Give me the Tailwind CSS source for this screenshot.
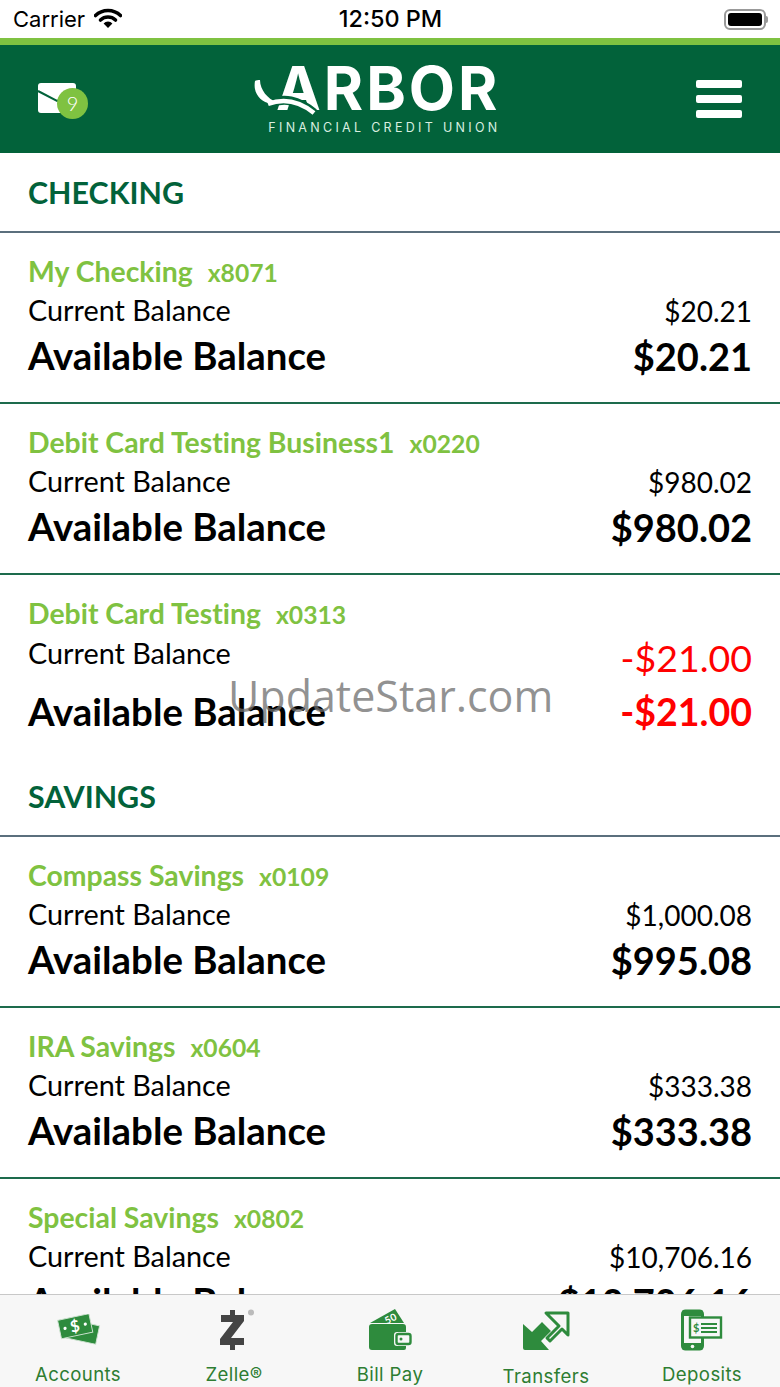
<!DOCTYPE html>
<html lang="en">
<head>
    <meta charset="UTF-8">
    <meta name="viewport" content="width=device-width, initial-scale=1.0">
    <title>Arbor Financial Credit Union</title>
    <script src="https://cdn.jsdelivr.net/npm/@tailwindcss/browser@4"></script>
</head>
<body class="bg-white">
<div class="relative w-[780px] h-[1387px] overflow-hidden flex flex-col bg-white font-[Lato,sans-serif] text-black">

    <!-- status bar -->
    <div class="h-[38px] shrink-0 flex items-center justify-between pl-[13px] pr-[12px] font-[Inter,sans-serif]">
        <div class="flex items-center gap-[9px] w-[200px]">
            <span class="text-[22px] leading-none">Carrier</span>
            <svg width="28" height="20" viewBox="0 0 28 20" class="-mt-[3px]">
                <path d="M1.5 7.5a18 18 0 0 1 25 0" fill="none" stroke="#000" stroke-width="3.6" stroke-linecap="round"/>
                <path d="M6.5 12a11 11 0 0 1 15 0" fill="none" stroke="#000" stroke-width="3.6" stroke-linecap="round"/>
                <path d="M9.6 15.4a6 6 0 0 1 8.8 0L14 20z" fill="#000"/>
            </svg>
        </div>
        <span class="text-[23.4px] leading-none font-medium">12:50 PM</span>
        <div class="w-[200px] flex justify-end items-center">
            <div class="w-[42px] h-[21px] rounded-[6px] border-2 border-[#999] p-[2px]">
                <div class="w-full h-full rounded-[3px] bg-black"></div>
            </div>
            <div class="w-[2px] h-[7px] bg-[#999] rounded-r-sm"></div>
        </div>
    </div>

    <!-- header -->
    <div class="h-[7px] shrink-0 bg-[#7fc241]"></div>
    <header class="h-[108px] shrink-0 bg-[#02623a] flex items-center justify-between pl-[38px] pr-[38px]">
        <div class="relative w-[38px] h-[30px] mt-[-3px] bg-white rounded-[3px]">
            <svg width="38" height="30" viewBox="0 0 38 30" class="absolute inset-0">
                <path d="M0 8l19 10 19-8" fill="none" stroke="#02623a" stroke-width="2"/>
            </svg>
            <div class="absolute left-[19px] top-[5px] w-[31px] h-[31px] rounded-full bg-[#7fc241] flex items-center justify-center text-white text-[20px] font-light leading-none">9</div>
        </div>
        <div class="relative w-[244px] h-[80px] ml-[-21px] mt-[-6px] flex flex-col items-end text-white">
            <div class="font-[Inter,sans-serif] font-bold text-[60px] leading-[64px] h-[64px] tracking-[3px] mr-[-3px]">ARBOR</div>
            <div class="font-[Inter,sans-serif] text-[12.5px] leading-[14px] tracking-[3.3px] mt-[1px] text-[#d9efe0] mr-[-3px]">FINANCIAL CREDIT UNION</div>
            <svg width="70" height="46" viewBox="0 0 70 46" class="absolute left-0 top-[22px]">
                <path d="M14 26C30 19 44 22 60 35" fill="none" stroke="#02623a" stroke-width="9"/>
                <path d="M14 26C30 20 45 23 60 35" fill="none" stroke="#fff" stroke-width="4.5"/>
                <path d="M1 3C-1 14 5 22 14 25C18 26 20 25 22 24C14 21 6 12 6 2C4 2 2 2 1 3Z" fill="#fff"/>
            </svg>
        </div>
        <div class="w-[46px] flex flex-col gap-[7px]">
            <div class="h-[8px] rounded-[2px] bg-white"></div>
            <div class="h-[8px] rounded-[2px] bg-white"></div>
            <div class="h-[8px] rounded-[2px] bg-white"></div>
        </div>
    </header>

    <!-- accounts -->
    <main class="flex-1 min-h-0 overflow-hidden">
        <h2 class="h-[80px] pt-[1px] flex items-center pl-[28px] text-[30.4px] font-bold text-[#02623a] border-b-2 border-[#5b6f7d]">CHECKING</h2>

        <section class="h-[171px] pt-[17px] pl-[28px] pr-[28px] border-b-2 border-[#1d6b4c]">
            <div class="h-[41px] flex items-baseline gap-[15px] text-[#7fc241] font-bold [font-variant-ligatures:none]"><span class="text-[28.4px]">My Checking</span><span class="text-[24.7px]">x8071</span></div>
            <div class="h-[40px] flex items-center justify-between text-[28px]"><span class="text-[28.8px]">Current Balance</span><span>$20.21</span></div>
            <div class="h-[50px] flex items-center justify-between text-[38px] font-bold"><span class="text-[38.4px]">Available Balance</span><span>$20.21</span></div>
        </section>

        <section class="h-[171px] pt-[17px] pl-[28px] pr-[28px] border-b-2 border-[#1d6b4c]">
            <div class="h-[41px] flex items-baseline gap-[15px] text-[#7fc241] font-bold [font-variant-ligatures:none]"><span class="text-[28.4px]">Debit Card Testing Business1</span><span class="text-[24.7px]">x0220</span></div>
            <div class="h-[40px] flex items-center justify-between text-[28px]"><span class="text-[28.8px]">Current Balance</span><span>$980.02</span></div>
            <div class="h-[50px] flex items-center justify-between text-[38px] font-bold"><span class="text-[38.4px]">Available Balance</span><span>$980.02</span></div>
        </section>

        <section class="h-[183px] pt-[17px] pl-[28px] pr-[28px]">
            <div class="h-[41px] flex items-baseline gap-[15px] text-[#7fc241] font-bold [font-variant-ligatures:none]"><span class="text-[28.4px]">Debit Card Testing</span><span class="text-[24.7px]">x0313</span></div>
            <div class="h-[40px] flex justify-between text-[28.8px] leading-[40px]"><span>Current Balance</span><span class="text-[37.5px] leading-[50px] text-[#ff0000]">-$21.00</span></div>
            <div class="h-[50px] mt-[14px] flex items-center justify-between text-[37.5px] font-bold"><span class="text-[38.4px]">Available Balance</span><span class="text-[#ff0000]">-$21.00</span></div>
        </section>

        <h2 class="h-[79px] flex items-center pl-[28px] text-[30.4px] font-bold text-[#02623a] border-b-2 border-[#5b6f7d]">SAVINGS</h2>

        <section class="h-[171px] pt-[17px] pl-[28px] pr-[28px] border-b-2 border-[#1d6b4c]">
            <div class="h-[41px] flex items-baseline gap-[15px] text-[#7fc241] font-bold [font-variant-ligatures:none]"><span class="text-[28.4px]">Compass Savings</span><span class="text-[24.7px]">x0109</span></div>
            <div class="h-[40px] flex items-center justify-between text-[28px]"><span class="text-[28.8px]">Current Balance</span><span>$1,000.08</span></div>
            <div class="h-[50px] flex items-center justify-between text-[38px] font-bold"><span class="text-[38.4px]">Available Balance</span><span>$995.08</span></div>
        </section>

        <section class="h-[171px] pt-[17px] pl-[28px] pr-[28px] border-b-2 border-[#1d6b4c]">
            <div class="h-[41px] flex items-baseline gap-[15px] text-[#7fc241] font-bold [font-variant-ligatures:none]"><span class="text-[28.4px]">IRA Savings</span><span class="text-[24.7px]">x0604</span></div>
            <div class="h-[40px] flex items-center justify-between text-[28px]"><span class="text-[28.8px]">Current Balance</span><span>$333.38</span></div>
            <div class="h-[50px] flex items-center justify-between text-[38px] font-bold"><span class="text-[38.4px]">Available Balance</span><span>$333.38</span></div>
        </section>

        <section class="h-[171px] pt-[17px] pl-[28px] pr-[28px]">
            <div class="h-[41px] flex items-baseline gap-[15px] text-[#7fc241] font-bold [font-variant-ligatures:none]"><span class="text-[28.4px]">Special Savings</span><span class="text-[24.7px]">x0802</span></div>
            <div class="h-[40px] flex items-center justify-between text-[28px]"><span class="text-[28.8px]">Current Balance</span><span>$10,706.16</span></div>
            <div class="h-[50px] flex items-center justify-between text-[38px] font-bold"><span class="text-[38.4px]">Available Balance</span><span>$10,706.16</span></div>
        </section>
    </main>

    <!-- tab bar -->
    <nav class="h-[93px] shrink-0 grid grid-cols-5 bg-[#f7f7f7] border-t border-[#c8c8c8] text-[#2e7d32] font-[Inter,sans-serif] text-[18.6px] tracking-[0.4px]">
        <div class="flex flex-col items-center">
            <svg width="46" height="32" viewBox="0 0 46 34" class="mt-[19px]">
                <g transform="rotate(12 28 20)"><rect x="9" y="9" width="35" height="20" fill="#2e8b3d" stroke="#cfe3d2"/></g>
                <g transform="rotate(-12 20 13)"><rect x="3" y="3" width="34" height="20" fill="#2e8b3d" stroke="#cfe3d2"/><circle cx="9" cy="13" r="1.7" fill="#fff"/><circle cx="31" cy="13" r="1.7" fill="#fff"/><text x="20" y="19" text-anchor="middle" font-size="17" font-weight="700" fill="#fff" font-family="Lato">$</text></g>
            </svg>
            <span class="mt-[17px] leading-[22px]">Accounts</span>
        </div>
        <div class="flex flex-col items-center">
            <svg width="38" height="42" viewBox="0 0 38 42" class="mt-[14px] ml-[6px]">
                <path d="M12 1h5v5h9v6L13 29h13v7h-9v5h-5v-5H2v-6L15 13H3V6h9z" fill="#444"/>
                <circle cx="33" cy="3.5" r="3" fill="#bbb"/>
            </svg>
            <span class="mt-[12px] leading-[22px]">Zelle®</span>
        </div>
        <div class="flex flex-col items-center">
            <svg width="44" height="42" viewBox="0 0 44 42" class="mt-[14px]">
                <path d="M2 14L27 0l9 14z" fill="#2e8b3d"/>
                <text x="23" y="13" text-anchor="middle" font-size="10" font-weight="700" fill="#fff" transform="rotate(-26 23 10)" font-family="Lato">50</text>
                <path d="M4 15h31a3 3 0 0 1 3 3v5H29a3 3 0 0 0-3 3v8a3 3 0 0 0 3 3h9v2a2 2 0 0 1-2 2H4a3 3 0 0 1-3-3V18a3 3 0 0 1 3-3z" fill="#2e8b3d"/>
                <rect x="28.5" y="25" width="14" height="10" rx="2" fill="#f7f7f7" stroke="#2e8b3d" stroke-width="2.4"/>
                <circle cx="33" cy="30" r="1.5" fill="#2e8b3d"/>
            </svg>
            <span class="mt-[12px] leading-[22px]">Bill Pay</span>
        </div>
        <div class="flex flex-col items-center">
            <svg width="48" height="40" viewBox="0 0 48 40" class="mt-[16px]">
                <path d="M1 13l9 8L20 11l9 9-10 10 8 9H3a2 2 0 0 1-2-2z" fill="#2e8b3d"/>
                <path d="M24 2h22v22l-6-6-12 12-3-3 12-12z" fill="none" stroke="#2e8b3d" stroke-width="3" stroke-linejoin="round"/>
            </svg>
            <span class="mt-[14px] leading-[22px]">Transfers</span>
        </div>
        <div class="flex flex-col items-center">
            <svg width="44" height="42" viewBox="0 0 44 42" class="mt-[14px]">
                <rect x="2.5" y="2" width="20" height="38" rx="3" fill="none" stroke="#2e8b3d" stroke-width="3"/>
                <rect x="2" y="1" width="21" height="6" rx="2" fill="#2e8b3d"/>
                <rect x="2" y="34" width="21" height="7" rx="2" fill="#2e8b3d"/>
                <circle cx="12.5" cy="37.5" r="1.8" fill="#f7f7f7"/>
                <rect x="10" y="8.5" width="31" height="20" fill="#f7f7f7" stroke="#2e8b3d" stroke-width="2.4"/>
                <text x="16.5" y="23" text-anchor="middle" font-size="11" font-weight="700" fill="#2e8b3d" font-family="Lato">$</text>
                <path d="M21 15h16M21 19h16M21 23h16" stroke="#2e8b3d" stroke-width="2"/>
            </svg>
            <span class="mt-[12px] leading-[22px]">Deposits</span>
        </div>
    </nav>

    <!-- watermark -->
    <div class="absolute left-[228px] top-[668px] text-[43px] leading-[56px] font-['Open_Sans',sans-serif] text-[#6e6e6e]/75 whitespace-nowrap">UpdateStar.com</div>
</div>
</body>
</html>
